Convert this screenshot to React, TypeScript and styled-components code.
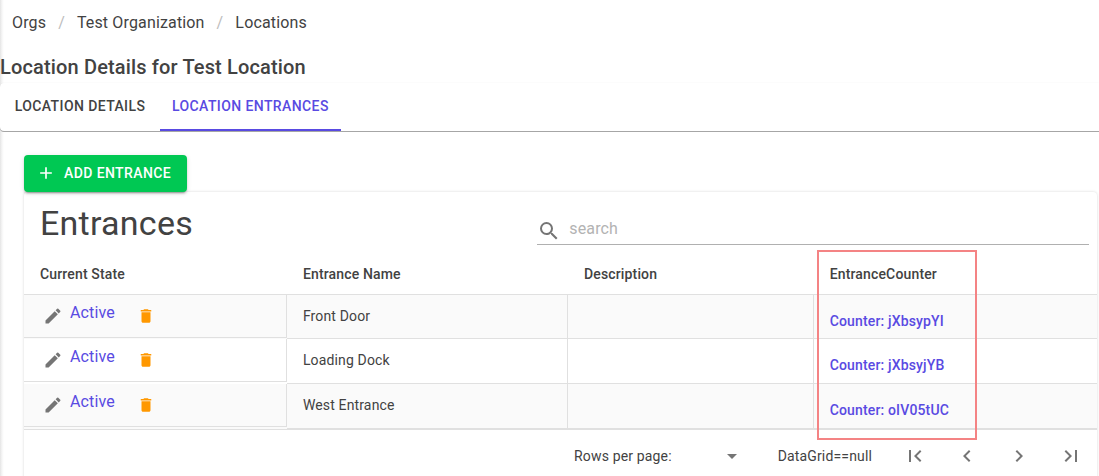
import React from "react";
import styled, { createGlobalStyle, css } from "styled-components";
import {
  MdAdd,
  MdArrowDropDown,
  MdChevronLeft,
  MdChevronRight,
  MdDelete,
  MdEdit,
  MdFirstPage,
  MdLastPage,
  MdSearch,
} from "react-icons/md";

const color = {
  text: "#424242",
  muted: "#757575",
  primary: "#594ae2",
  success: "#00c853",
  warning: "#ff9800",
  line: "#e0e0e0",
  stripe: "#fafafa",
  highlight: "#f48384",
};

const GlobalStyle = createGlobalStyle`
  *, *::before, *::after { box-sizing: border-box; }
  body {
    margin: 0;
    background: #fff;
    color: ${color.text};
    font-family: Roboto, "Liberation Sans", sans-serif;
    font-size: 14px;
    line-height: 20px;
    letter-spacing: 0.01071em;
    overflow: hidden;
  }
  button, input, select { font: inherit; color: inherit; letter-spacing: inherit; }
  a { color: inherit; text-decoration: none; }
`;

const Page = styled.main`
  min-height: 100vh;
  background: linear-gradient(to right, #e4e4e4, #f6f6f6 2px, #fff 4px) no-repeat left / 4px 100%;
`;

const Breadcrumbs = styled.ol`
  display: flex;
  margin: 0;
  padding: 11px 12px 9px;
  list-style: none;
  font-size: 16px;
  line-height: 24px;
`;

const Crumb = styled.li`
  & + &::before {
    content: "/";
    padding: 0 12px;
    color: #bdbdbd;
  }
`;

const PageTitle = styled.h1`
  margin: 0;
  padding-top: 7px;
  font-size: 20px;
  font-weight: 500;
  line-height: 32px;
`;

const TabBar = styled.div`
  display: flex;
  height: 48px;
  border-radius: 4px 0 0 4px;
  background: #fff;
  box-shadow: 0 0 1px rgba(0, 0, 0, 0.12), 0 1px 0 #a8a8a8;
`;

const Tab = styled.button<{ $active?: boolean }>`
  min-width: 160px;
  padding: 0 12px;
  border: 0;
  border-bottom: 2px solid transparent;
  background: none;
  font-weight: 500;
  letter-spacing: 0.02857em;
  text-transform: uppercase;
  ${({ $active }) =>
    $active &&
    css`
      color: ${color.primary};
      border-color: ${color.primary};
    `}
`;

const Panel = styled.section`
  padding: 24px 2px 0 24px;
`;

const AddButton = styled.button`
  position: relative;
  display: flex;
  align-items: center;
  gap: 8px;
  height: 37px;
  padding: 0 16px 1px 12px;
  border: 0;
  border-radius: 4px;
  background: ${color.success};
  color: #fff;
  font-weight: 500;
  letter-spacing: 0.02857em;
  text-transform: uppercase;
  box-shadow: 0 3px 1px -2px rgba(0, 0, 0, 0.2), 0 2px 2px rgba(0, 0, 0, 0.14),
    0 1px 5px rgba(0, 0, 0, 0.12);
`;

const Card = styled.div`
  border-radius: 4px;
  background: #fff;
  box-shadow: 0 0 3px rgba(0, 0, 0, 0.16);
`;

const Toolbar = styled.div`
  display: flex;
  align-items: center;
  justify-content: space-between;
  height: 62px;
  padding: 0 8px 0 16px;
`;

const CardTitle = styled.h2`
  margin: 0;
  font-size: 34px;
  font-weight: 400;
  line-height: 42px;
  letter-spacing: 0.00735em;
`;

const SearchField = styled.label`
  display: flex;
  align-items: center;
  gap: 8px;
  width: 52.6%;
  height: 32px;
  margin-top: 12px;
  padding-top: 4px;
  border-bottom: 1px solid #b0b0b0;
  color: ${color.muted};

  input {
    flex: 1;
    min-width: 0;
    padding: 0 0 4px;
    border: 0;
    outline: 0;
    background: none;
    font-size: 16px;
    line-height: 24px;
  }
  input::placeholder { color: #b3b3b3; }
`;

const Grid = styled.table`
  width: 100%;
  border-collapse: separate;
  border-spacing: 0;
  table-layout: fixed;
  border-bottom: 1px solid ${color.line};
`;

const HeadCell = styled.th<{ $width?: string }>`
  position: relative;
  width: ${({ $width }) => $width ?? "auto"};
  height: 41px;
  padding: 0 16px;
  border-bottom: 1px solid ${color.line};
  font-weight: 500;
  text-align: left;
`;

const Highlight = styled.span`
  position: absolute;
  top: -4px;
  left: 3px;
  width: 160px;
  height: 190px;
  border: 2px solid ${color.highlight};
  pointer-events: none;
`;

const Row = styled.tr`
  height: 45px;
  &:first-child { height: 44px; }
  &:nth-child(odd) { background: ${color.stripe}; }
`;

const Cell = styled.td`
  padding: 0 16px 2px;
  border-bottom: 1px solid ${color.line};
  border-right: 1px solid ${color.line};
  &:last-child { border-right: 0; }
`;

const StateCell = styled.td`
  padding: 0;
  vertical-align: top;
`;

const StateContent = styled.div`
  display: flex;
  align-items: center;
  height: 43px;
  padding: 0 19px;
  border-right: 1px solid ${color.line};
  border-bottom: 1px solid ${color.line};
`;

const StateLink = styled.a`
  padding: 0 21px 6px 7px;
  color: ${color.primary};
  font-size: 16px;
  line-height: 24px;
`;

const CounterLink = styled.a`
  display: block;
  padding-top: 10px;
  color: ${color.primary};
  font-weight: 500;
`;

const IconButton = styled.button<{ $tone?: string; $size?: number }>`
  display: grid;
  place-items: center;
  width: ${({ $size }) => $size ?? 20}px;
  height: ${({ $size }) => $size ?? 20}px;
  padding: 0;
  border: 0;
  background: none;
  color: ${({ $tone }) => $tone ?? color.muted};
`;

const Pager = styled.div`
  display: flex;
  align-items: center;
  justify-content: flex-end;
  height: 52px;
  padding-right: 2px;
`;

const PageSize = styled.label`
  display: flex;
  align-items: center;
`;

const SelectBox = styled.span`
  display: grid;
  width: 72px;
  height: 24px;

  select, svg { grid-area: 1 / 1; }
  select {
    width: 100%;
    border: 0;
    background: none;
    appearance: none;
  }
  svg {
    justify-self: end;
    color: ${color.muted};
    pointer-events: none;
  }
`;

const PageInfo = styled.span`
  margin: 0 19px 0 34px;
`;

const PageButtons = styled.div`
  display: flex;
  gap: 4px;
`;

const crumbs = ["Orgs", "Test Organization", "Locations"];

const entrances = [
  { name: "Front Door", counter: "jXbsypYI" },
  { name: "Loading Dock", counter: "jXbsyjYB" },
  { name: "West Entrance", counter: "oIV05tUC" },
];

const pageActions = [
  { label: "First page", Icon: MdFirstPage },
  { label: "Previous page", Icon: MdChevronLeft },
  { label: "Next page", Icon: MdChevronRight },
  { label: "Last page", Icon: MdLastPage },
];

export default function App() {
  return (
    <>
      <GlobalStyle />
      <Page>
        <nav aria-label="Breadcrumb">
          <Breadcrumbs>
            {crumbs.map((crumb) => (
              <Crumb key={crumb}>
                <a href="#">{crumb}</a>
              </Crumb>
            ))}
          </Breadcrumbs>
        </nav>
        <PageTitle>Location Details for Test Location</PageTitle>
        <TabBar role="tablist">
          <Tab role="tab" aria-selected={false}>Location Details</Tab>
          <Tab role="tab" aria-selected $active>Location Entrances</Tab>
        </TabBar>
        <Panel role="tabpanel">
          <AddButton>
            <MdAdd size={20} />
            Add Entrance
          </AddButton>
          <Card>
            <Toolbar>
              <CardTitle>Entrances</CardTitle>
              <SearchField>
                <MdSearch size={24} />
                <input type="text" placeholder="search" aria-label="Search entrances" />
              </SearchField>
            </Toolbar>
            <Grid>
              <thead>
                <tr>
                  <HeadCell $width="24.5%">Current State</HeadCell>
                  <HeadCell $width="26.2%">Entrance Name</HeadCell>
                  <HeadCell $width="22.9%">Description</HeadCell>
                  <HeadCell>
                    EntranceCounter
                    <Highlight />
                  </HeadCell>
                </tr>
              </thead>
              <tbody>
                {entrances.map(({ name, counter }) => (
                  <Row key={name}>
                    <StateCell>
                      <StateContent>
                        <IconButton aria-label={`Edit ${name}`}>
                          <MdEdit size={20} />
                        </IconButton>
                        <StateLink href="#">Active</StateLink>
                        <IconButton $tone={color.warning} aria-label={`Delete ${name}`}>
                          <MdDelete size={18} />
                        </IconButton>
                      </StateContent>
                    </StateCell>
                    <Cell>{name}</Cell>
                    <Cell />
                    <Cell>
                      <CounterLink href="#">Counter: {counter}</CounterLink>
                    </Cell>
                  </Row>
                ))}
              </tbody>
            </Grid>
            <Pager>
              <PageSize>
                Rows per page:
                <SelectBox>
                  <select defaultValue="">
                    <option value="" />
                  </select>
                  <MdArrowDropDown size={24} />
                </SelectBox>
              </PageSize>
              <PageInfo>DataGrid==null</PageInfo>
              <PageButtons>
                {pageActions.map(({ label, Icon }) => (
                  <IconButton key={label} $size={48} aria-label={label}>
                    <Icon size={24} />
                  </IconButton>
                ))}
              </PageButtons>
            </Pager>
          </Card>
        </Panel>
      </Page>
    </>
  );
}
